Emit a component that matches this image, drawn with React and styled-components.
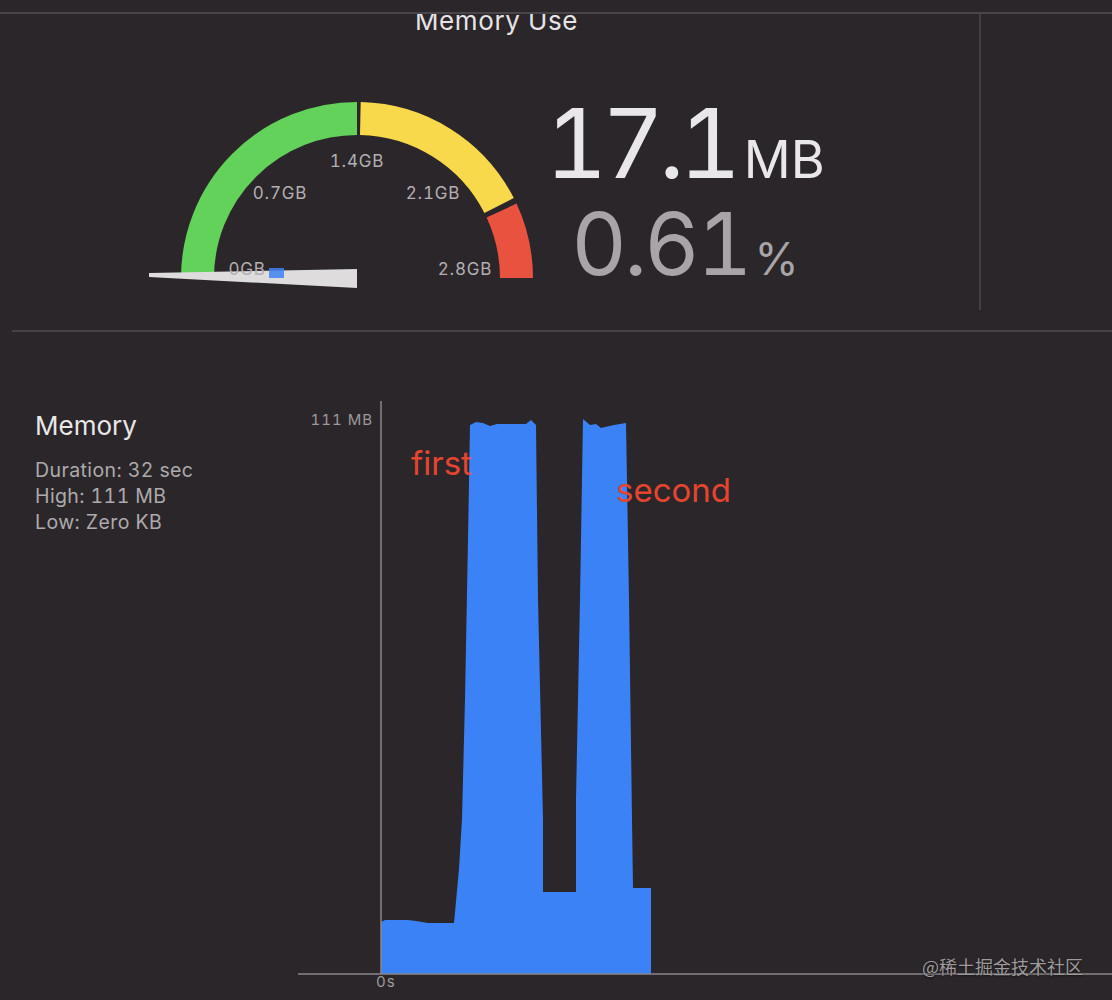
import React from 'react'
import styled, { createGlobalStyle } from 'styled-components'

const GlobalStyle = createGlobalStyle`
  html, body {
    margin: 0;
    padding: 0;
    background: #2b2629;
    overflow: hidden;
  }
  body {
    font-family: Inter, "Noto Sans", "Noto Sans CJK SC", sans-serif;
    font-variant-numeric: tabular-nums;
  }
`

// gauge geometry, in page coordinates
const CX = 357
const CY = 278
const R = 159.5

function arc(from, to) {
  const p = (a) => {
    const r = (a * Math.PI) / 180
    return [CX + R * Math.cos(r), CY - R * Math.sin(r)]
  }
  const [x1, y1] = p(from)
  const [x2, y2] = p(to)
  return `M${x1},${y1} A${R},${R} 0 0 1 ${x2},${y2}`
}

const segments = [
  { from: 180, to: 90, color: '#62d25b' },
  { from: 88.8, to: 27, color: '#f8d94b' },
  { from: 25, to: 0, color: '#e8523f' },
]

const gaugeLabels = [
  { text: '0GB', x: 247, y: 275 },
  { text: '0.7GB', x: 280, y: 199 },
  { text: '1.4GB', x: 357, y: 167 },
  { text: '2.1GB', x: 433, y: 199 },
  { text: '2.8GB', x: 465, y: 275 },
]

const memoryArea =
  'M381,975 L381,923 L385,921 L408,921 L416,922 L428,924 L454,924 L459,870 L462,820 ' +
  'L465,700 L468,540 L470,426 L476,423 L483,424 L490,427 L497,425 L526,425 L531,421 ' +
  'L536,426 L538,600 L543,820 L543,893 L576,893 L576,800 L580,600 L583,420 L590,426 ' +
  'L596,425 L601,429 L614,426 L626,424 L629,600 L632,820 L633,889 L651,889 L651,975 Z'

function App() {
  return (
    <Page>
      <GlobalStyle />
      <TopPanel>
        <GaugeCell>
          <Title>Memory Use</Title>
          <GaugeRow>
            <svg width="400" height="268" viewBox="140 32 400 268">
              {segments.map((s) => (
                <path key={s.from} d={arc(s.from, s.to)} fill="none" stroke={s.color} strokeWidth="33" />
              ))}
              <polygon points="149,273 357,269 357,288 149,277" fill="#dedcdd" />
              <rect x="269" y="268" width="15" height="10" fill="#3f84f2" opacity="0.85" />
              {gaugeLabels.map((l) => (
                <GaugeText key={l.text} x={l.x} y={l.y} textAnchor="middle">
                  {l.text}
                </GaugeText>
              ))}
            </svg>
            <Stats>
              <StatRow color="#e9e7e9">
                <Num size={96} tracking={-5.5}>17.1</Num>
                <Unit size={52} gap={8}>MB</Unit>
              </StatRow>
              <StatRow color="#a8a4a7">
                <Num size={86} tracking={-3}>0.61</Num>
                <Unit size={45} gap={5}>%</Unit>
              </StatRow>
            </Stats>
          </GaugeRow>
        </GaugeCell>
      </TopPanel>
      <Divider />
      <Bottom>
        <Info>
          <InfoTitle>Memory</InfoTitle>
          <InfoLines>
            <InfoLine>Duration: 32 sec</InfoLine>
            <InfoLine>High: 111 MB</InfoLine>
            <InfoLine>Low: Zero KB</InfoLine>
          </InfoLines>
        </Info>
        <svg width="814" height="667" viewBox="298 333 814 667">
          <path d={memoryArea} fill="#3b82f6" />
          <line x1="381" y1="402" x2="381" y2="975" stroke="#8a868a" strokeWidth="1.5" />
          <line x1="298" y1="975" x2="1112" y2="975" stroke="#8a868a" strokeWidth="1.5" />
          <AxisText x="373" y="426" textAnchor="end">111 MB</AxisText>
          <AxisText x="376" y="988">0s</AxisText>
          <Note x="411" y="476">first</Note>
          <Note x="616" y="503">second</Note>
        </svg>
        <Watermark>@稀土掘金技术社区</Watermark>
      </Bottom>
    </Page>
  )
}

export default App

const Page = styled.div`
  height: 1000px;
  padding-top: 12px;
  box-sizing: border-box;
  display: flex;
  flex-direction: column;
`

const TopPanel = styled.div`
  border-top: 2px solid #4a4548;
  height: 316px;
  display: flex;
`

const GaugeCell = styled.div`
  width: 981px;
  height: 296px;
  box-sizing: border-box;
  border-right: 2px solid #433e41;
  display: flex;
  flex-direction: column;
  overflow: hidden;
`

const Title = styled.div`
  margin-top: -6px;
  padding-left: 14px;
  text-align: center;
  font-size: 26px;
  line-height: 26px;
  letter-spacing: 0.6px;
  color: #e6e4e6;
`

const GaugeRow = styled.div`
  display: flex;
  margin-top: -2px;
  padding-left: 140px;
`

const GaugeText = styled.text`
  font-family: Inter, sans-serif;
  font-size: 17px;
  letter-spacing: 0.8px;
  fill: #b3afb2;
`

const Stats = styled.div`
  width: 290px;
  margin-top: 63px;
  display: flex;
  flex-direction: column;
  align-items: center;
  gap: 10px;
`

const StatRow = styled.div`
  display: flex;
  align-items: baseline;
  color: ${(p) => p.color};
`

const Num = styled.span`
  font-size: ${(p) => p.size}px;
  line-height: 1;
  letter-spacing: ${(p) => p.tracking}px;
`

const Unit = styled.span`
  font-size: ${(p) => p.size}px;
  line-height: 1;
  margin-left: ${(p) => p.gap}px;
`

const Divider = styled.div`
  height: 2px;
  margin-left: 12px;
  background: #474245;
`

const Bottom = styled.div`
  flex: 1;
  display: flex;
  position: relative;
`

const Info = styled.div`
  width: 298px;
  flex-shrink: 0;
  box-sizing: border-box;
  padding: 78px 0 0 35px;
`

const InfoTitle = styled.div`
  font-size: 26px;
  line-height: 32px;
  color: #e9e7e9;
`

const InfoLines = styled.div`
  margin-top: 15px;
`

const InfoLine = styled.div`
  font-size: 19.5px;
  line-height: 26px;
  letter-spacing: 0.4px;
  color: #aeaaad;
`

const AxisText = styled.text`
  font-family: Inter, sans-serif;
  font-size: 15px;
  letter-spacing: 1px;
  fill: #9d999c;
`

const Note = styled.text`
  font-family: Inter, sans-serif;
  font-size: 33px;
  fill: #e5452f;
`

const Watermark = styled.span`
  position: absolute;
  right: 29px;
  bottom: 25px;
  font-family: "Noto Sans CJK SC", sans-serif;
  font-size: 18px;
  line-height: 18px;
  color: #9e9a9d;
  text-shadow: 0 1px 2px rgba(0, 0, 0, 0.6);
`
